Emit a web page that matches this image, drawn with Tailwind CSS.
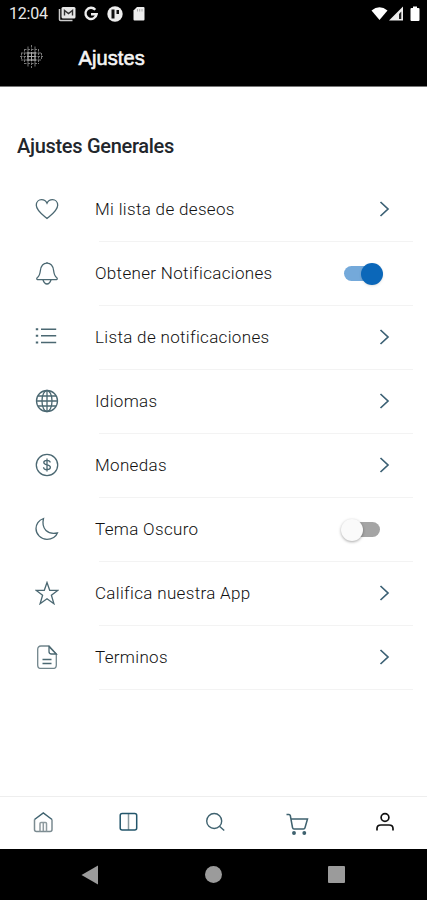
<!DOCTYPE html>
<html lang="es">
<head>
  <meta charset="UTF-8" />
  <meta name="viewport" content="width=device-width, initial-scale=1.0"/>
  <title>Ajustes</title>
  <script src="https://cdn.jsdelivr.net/npm/@tailwindcss/browser@4"></script>
</head>
<body class="bg-white font-[Roboto,sans-serif]">
  <div class="w-[427px] h-[900px] flex flex-col overflow-hidden">

    <header class="h-[87px] shrink-0 bg-black border-b border-[#777] text-white">
      <!-- Status bar -->
      <div class="h-7 flex items-center pl-[9px] pr-[7px]">
        <span class="w-[49px] text-[16px] leading-none tracking-[-0.2px] text-[#e8e8e8]">12:04</span>
        <svg class="w-[19px] h-4" viewBox="0 0 19 16" fill="none">
          <path d="M1.500 3v10.500q0 1 1 1h12" stroke="#ccc" stroke-width="1.500"/>
          <rect x="3.500" y="1" width="14" height="11.500" rx="1.500" fill="#e6e6e6"/>
          <path d="M6.500 9.500V4.500l4 3 4-3v5" stroke="#333" stroke-width="1.400"/>
        </svg>
        <svg class="w-4 h-4 ml-[6px]" viewBox="0 0 16 16" fill="none" stroke="#eee" stroke-width="2.400">
          <path d="M12.300 3.700A5.600 5.600 0 1 0 13.600 8.300H8"/>
        </svg>
        <svg class="w-4 h-4 ml-2" viewBox="0 0 16 16">
          <circle cx="8" cy="8" r="7.700" fill="#eee"/>
          <path d="M4.500 3.500h3v9h-3zM9.500 4h2.500v4H9.500z" fill="#111"/>
        </svg>
        <svg class="w-3 h-4 ml-[10px]" viewBox="0 0 12 16">
          <path d="M4 1h6.500q1 0 1 1v11.500q0 1-1 1h-9q-1 0-1-1V4.500z" fill="#eee"/>
          <path d="M4.500 3v2.500M6.700 3v2.500M9 3v2.500" stroke="#999" stroke-width=".8"/>
        </svg>
        <svg class="w-[17px] h-4 ml-auto" viewBox="0 0 17 16"><path d="M.5 4.500Q8.500-2 16.500 4.500L8.500 14z" fill="#fff"/></svg>
        <svg class="w-[15px] h-4 ml-px" viewBox="0 0 15 16">
          <path d="M14 .5V14.500H0z" fill="#eee"/>
          <path d="M12.300 5.500V13H10V8z" fill="#222"/>
        </svg>
        <svg class="w-[10px] h-4 ml-[6px]" viewBox="0 0 10 16"><path d="M3 .5h4V2h1.500q1 0 1 1v11q0 1-1 1h-7q-1 0-1-1V3q0-1 1-1H3z" fill="#fff"/></svg>
      </div>
      <!-- App bar -->
      <div class="h-[58px] flex items-center pl-5 pb-px">
        <svg class="w-[23px] h-[23px]" viewBox="0 0 23 23" fill="none">
          <g stroke="#777" stroke-width="1">
            <path d="M1.500 8v7M4.500 4v15M8 1.500v20M11.500 0v23M15 1.500v20M18.500 4v15M21.500 8v7" stroke-dasharray="2.500 1"/>
            <path d="M4 4.500h15M1 8h21M0 11.500h23M1 15h21M4 18.500h15" stroke-dasharray="2.500 1"/>
          </g>
          <path d="M8 7v9M11.500 7v9M15 7v9M7 8h9M7 11.500h9M7 15h9" stroke="#aaa"/>
        </svg>
        <h1 class="ml-[35.5px] mt-[3px] font-['Liberation_Sans',sans-serif] text-[20px] leading-none tracking-[0.1px] text-[#f5f5f5] [-webkit-text-stroke:0.6px_#f5f5f5]">Ajustes</h1>
      </div>
    </header>

    <main class="flex-1">
      <h2 class="pl-[17px] pt-[47px] text-[20px] leading-6 h-[91px] font-medium tracking-[-0.3px] text-[#22262b]">Ajustes Generales</h2>
      <ul id="rows"></ul>
    </main>

    <!-- Tab bar -->
    <nav class="h-[54px] shrink-0 border-t border-[#eee] border-b border-b-[#888] flex items-center pb-[3px] pl-[31px] pr-[30px] justify-between text-[#3f626f]">
      <svg class="w-6 h-6" viewBox="0 0 24 24" fill="none" stroke="currentColor" stroke-width="1.500">
        <path d="M3.500 9.500V19.500q0 2 2 2H19q2 0 2-2V9.500" stroke="#7b8b91"/>
        <path d="M3.500 9.500L12.300 3l8.700 6.500"/>
        <path d="M9 21.500v-8q0-1 1-1h4.500q1 0 1 1v8M12.300 13v8" stroke="#8f9b9f"/>
      </svg>
      <svg class="w-6 h-6 ml-px" viewBox="0 0 24 24" fill="none" stroke="#23566b" stroke-width="1.500">
        <path d="M12.500 4v16" stroke="#8a9a9f"/>
        <rect x="4.200" y="3.500" width="16.500" height="16.500" rx="2"/>
      </svg>
      <svg class="w-6 h-6 ml-px" viewBox="0 0 24 24" fill="none" stroke="currentColor" stroke-width="1.400">
        <circle cx="12.200" cy="11" r="7.500"/><path d="M17.700 16.500L22.200 20.500"/>
      </svg>
      <svg class="w-6 h-6 mt-1 mr-[3px]" viewBox="0 0 24 24" fill="none" stroke="currentColor" stroke-width="1.500">
        <path d="M.5 2.500h2.500q1 0 1.300 1L6.500 15.500q.3 1.500 1.500 1.500h9.500q1.200 0 1.500-1.200L21.500 7H5"/>
        <circle cx="8" cy="21" r="1.200" fill="currentColor"/><circle cx="18.300" cy="21" r="1.200" fill="currentColor"/>
      </svg>
      <svg class="w-6 h-6" viewBox="0 0 24 24" fill="none" stroke="#111" stroke-width="1.700">
        <circle cx="12" cy="7.500" r="3.900"/><path d="M4 20.500v-2q0-3.500 4-3.500h8q4 0 4 3.500v2"/>
      </svg>
    </nav>

    <!-- System navigation -->
    <div class="h-[51px] -mt-px shrink-0 bg-black flex items-center justify-between pl-[81px] pr-[82px] text-[#9b9b9b]">
      <svg class="w-[17px] h-5" viewBox="0 0 17 20" fill="currentColor"><path d="M17 .5v19L.5 10z"/></svg>
      <div class="w-[17px] h-[17px] rounded-full bg-[#9b9b9b]"></div>
      <div class="w-[17px] h-[17px] rounded-[1px] bg-[#9b9b9b]"></div>
    </div>
  </div>

  <script>
    const rows = [
      { label: "Mi lista de deseos", icon: '<path d="M12 21.500C8 18 1.300 13.500 1.300 8.200C1.300 4.800 3.800 2.700 6.500 2.700C9 2.700 11 4 12 6.200C13 4 15 2.700 17.500 2.700C20.200 2.700 22.700 4.800 22.700 8.200C22.700 13.500 16 18 12 21.500z"/>' },
      { label: "Obtener Notificaciones", toggle: "on", icon: '<path d="M12 1v1.500M2.500 18.700c-1-.2-1-1.500 0-2.200C4.500 15 5 12.500 5.400 9.500C6 5 8.500 2.200 12 2.200s6 2.800 6.600 7.300c.4 3 .9 5.500 2.900 7c1 .7 1 2 0 2.200zM8 19q1.500 4 4 4t4-4"/>' },
      { label: "Lista de notificaciones", icon: '<path d="M6 4.200h15.200M6 10.700h15.200M6 17.500h15.200" stroke-width="1.500"/><path d="M.8 4.200h2.400M.8 10.700h2.400M.8 17.500h2.400" stroke-width="2"/>' },
      { label: "Idiomas", icon: '<circle cx="12" cy="12" r="10.500"/><ellipse cx="12" cy="12" rx="5" ry="10.500"/><path d="M12 1.500v21M1.500 12h21M3 7h18M3 17h18"/>' },
      { label: "Monedas", icon: '<circle cx="12" cy="12" r="10.700"/><path d="M15.200 9.500C15 8 13.700 7.400 12 7.400c-2 0-3.200.9-3.200 2.200c0 3.200 6.600 1.500 6.600 4.700c0 1.500-1.400 2.400-3.400 2.400s-3.400-1-3.500-2.500M12 5.500v13"/>' },
      { label: "Tema Oscuro", toggle: "off", icon: '<path d="M8.500 1.500C3.500 3 1 7.500 1 11.500C1 17.500 6 22.300 12 22.300c5 0 9.300-2.800 10.500-6.500C13 18 6 12 8.500 1.500z"/>' },
      { label: "Califica nuestra App", icon: '<path d="M12 1.500l2.700 7.800h8.300l-6.600 4.900l2.500 8.500L12 17.700l-6.900 5l2.500-8.500L1 9.300h8.300z"/>' },
      { label: "Terminos", icon: '<path d="M14 1H6Q2.700 1 2.700 4.500v15.500q0 3.500 3.300 3.500h12q3.300 0 3.300-3.500V9z" stroke="#71858c"/><path d="M14 1V6.500q0 2.500 2.500 2.500h4.800L13.500 1M7.500 14.500h9M7.500 18.500h9"/>' },
    ];

    const chevron = '<svg class="w-3 h-[18px] mr-[37px] mb-px" viewBox="0 0 12 18" fill="none" stroke="#3b6074" stroke-width="1.700"><path d="M2.500 2l7.500 7-7.500 7"/></svg>';
    const toggles = {
      on: '<div class="w-[39px] h-[23px] mr-[44px] flex items-center relative"><div class="w-[36px] h-[15px] rounded-full bg-[#74a9da]"></div><div class="absolute right-0 w-[22px] h-[22px] rounded-full bg-[#0b67b9] shadow-sm"></div></div>',
      off: '<div class="w-[39px] h-[23px] mr-[47px] flex items-center justify-end relative"><div class="w-[32px] h-[15px] rounded-full bg-[#a5a5a5]"></div><div class="absolute left-0 w-[22px] h-[22px] rounded-full bg-[#fafafa] shadow-[0_1px_3px_rgba(0,0,0,0.35)]"></div></div>',
    };

    document.getElementById("rows").innerHTML = rows.map(row => `
      <li>
        <div class="h-[63px] flex items-center justify-between">
          <svg class="w-6 h-6 ml-[35px] mr-9 mb-px shrink-0" viewBox="0 0 24 24" fill="none" stroke="#4b6872" stroke-width="1.300">${row.icon}</svg>
          <span class="flex-1 text-[17px] leading-none tracking-[0.33px] font-light text-[#111]">${row.label}</span>
          ${row.toggle ? toggles[row.toggle] : chevron}
        </div>
        <div class="h-px ml-[99px] mr-[14px] bg-[#f3f3f3]"></div>
      </li>`).join("");
  </script>
</body>
</html>
